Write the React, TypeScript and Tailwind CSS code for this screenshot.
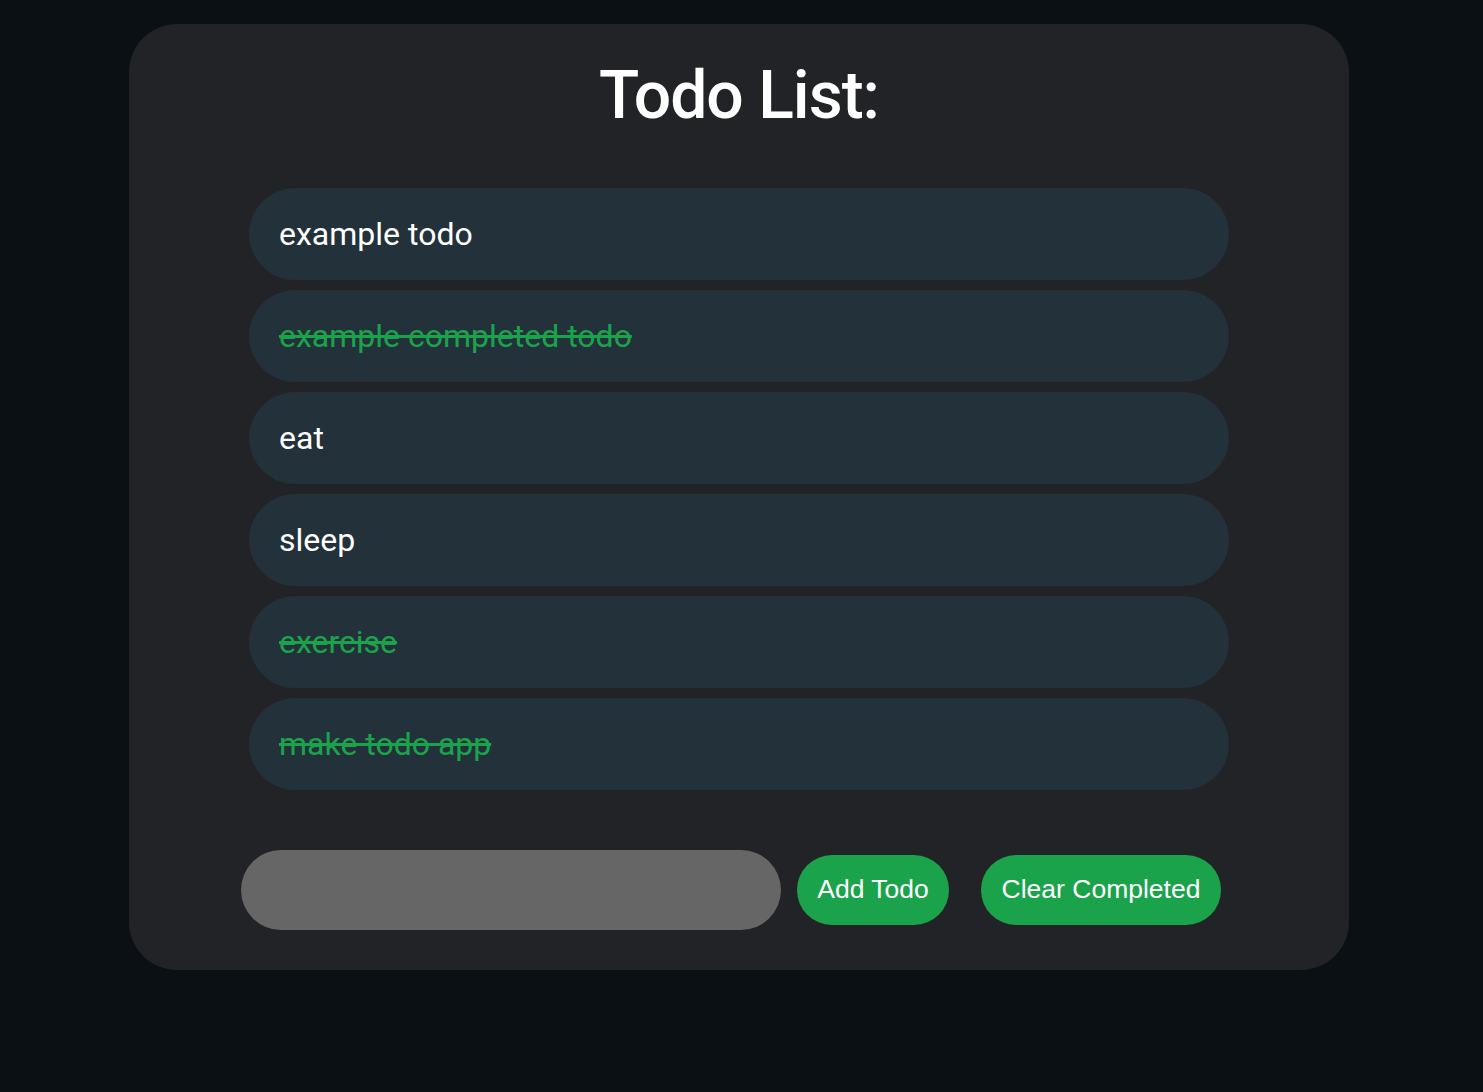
import React from "react";

const todos = [
  { text: "example todo", done: false },
  { text: "example completed todo", done: true },
  { text: "eat", done: false },
  { text: "sleep", done: false },
  { text: "exercise", done: true },
  { text: "make todo app", done: true },
];

const App = () => {
  return (
    <div className="min-h-[1092px] bg-[#0b1014] pt-6 font-['Roboto',sans-serif]">
      <div className="ml-[129px] w-[1220px] rounded-[48px] bg-[#222327] pt-[32px] pb-10">
        <h1 className="text-center text-[66px] leading-[80px] font-medium tracking-[-1px] text-white">
          Todo List:
        </h1>

        <ul className="mt-[52px] flex flex-col gap-[10px] px-[120px]">
          {todos.map((todo) => (
            <li
              key={todo.text}
              className="flex h-[92px] items-center rounded-full bg-[#23313a] px-[30px]"
            >
              <span
                className={
                  todo.done
                    ? "text-[32px] text-[#1ba34c] line-through"
                    : "text-[32px] text-white"
                }
              >
                {todo.text}
              </span>
            </li>
          ))}
        </ul>

        <div className="mt-[60px] flex items-center pl-[112px]">
          <input
            type="text"
            className="h-20 w-[540px] rounded-full bg-[#666666] px-6 text-2xl text-white outline-none"
          />
          <button className="ml-4 h-[70px] w-[152px] rounded-full bg-[#1ba34c] font-['Liberation_Sans',sans-serif] text-[26.5px] text-white">
            Add Todo
          </button>
          <button className="ml-8 h-[70px] w-[240px] rounded-full bg-[#1ba34c] font-['Liberation_Sans',sans-serif] text-[26.5px] text-white">
            Clear Completed
          </button>
        </div>
      </div>
    </div>
  );
};

export default App;
